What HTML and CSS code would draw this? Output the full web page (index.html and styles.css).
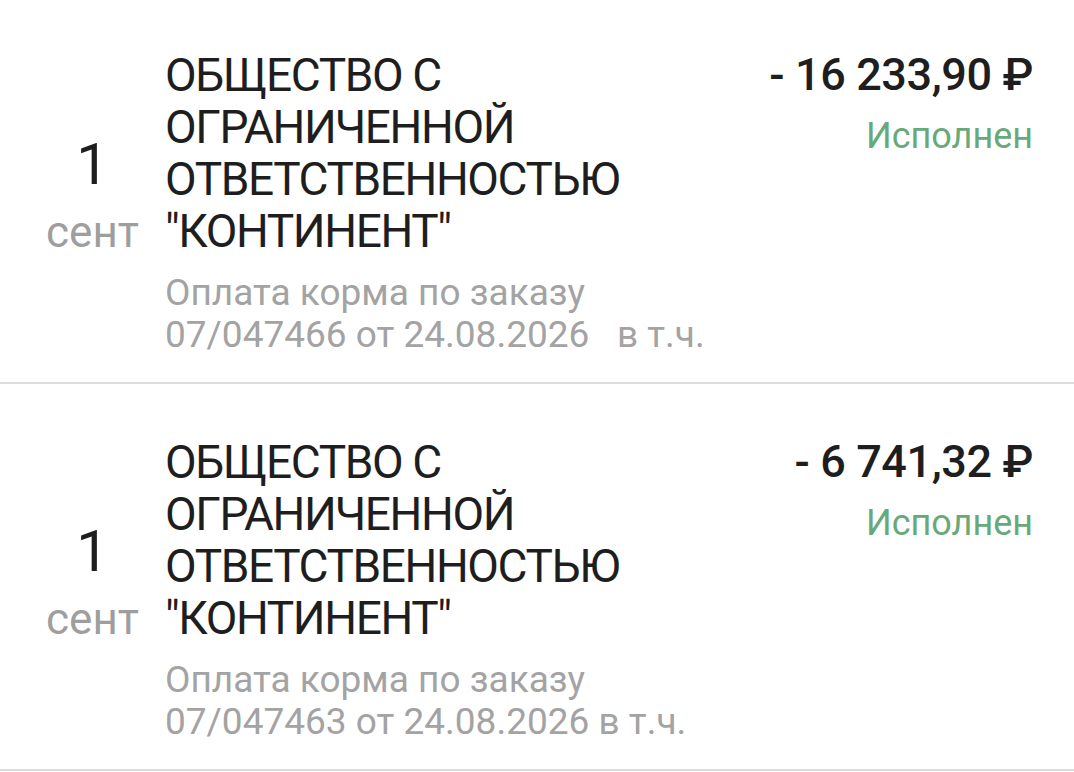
FILE: index.html
```html
<!DOCTYPE html>
<html lang="ru">
<head>
    <meta charset="UTF-8">
    <meta name="viewport" content="width=device-width, initial-scale=1.0">
    <title>Операции</title>
    <link rel="stylesheet" href="styles.css">
</head>
<body>

    <div class="op-list">
        <div class="op-item">
            <div class="op-date">
                <div class="op-day">1</div>
                <div class="op-month">сент</div>
            </div>
            <div class="op-info">
                <div class="op-name">ОБЩЕСТВО С ОГРАНИЧЕННОЙ ОТВЕТСТВЕННОСТЬЮ "КОНТИНЕНТ"</div>
                <div class="op-desc">Оплата корма по заказу<br>07/047466 от 24.08.2026 &nbsp; в т.ч.</div>
            </div>
            <div class="op-sum">
                <div class="op-amount">- 16 233,90 ₽</div>
                <div class="op-status">Исполнен</div>
            </div>
        </div>

        <div class="op-item">
            <div class="op-date">
                <div class="op-day">1</div>
                <div class="op-month">сент</div>
            </div>
            <div class="op-info">
                <div class="op-name">ОБЩЕСТВО С ОГРАНИЧЕННОЙ ОТВЕТСТВЕННОСТЬЮ "КОНТИНЕНТ"</div>
                <div class="op-desc">Оплата корма по заказу<br>07/047463 от 24.08.2026 в т.ч.</div>
            </div>
            <div class="op-sum">
                <div class="op-amount">- 6 741,32 ₽</div>
                <div class="op-status">Исполнен</div>
            </div>
        </div>
    </div>

</body>
</html>
```

FILE: styles.css
```css
body {
    font-family: Roboto, "Noto Sans", sans-serif;
    margin: 0;
    padding: 0;
    background: #ffffff;
    color: #1e1e1e;
}
.op-list {
    margin-top: -3px;
}
.op-item {
    display: flex;
    padding: 50px 41px 26px 30px;
    border-top: 2px solid #dcdcdc;
}
.op-item:first-child {
    border-top-color: transparent;
}
.op-item + .op-item {
    padding-top: 52px;
    border-bottom: 2px solid #dcdcdc;
}
.op-date {
    width: 125px;
    margin-right: 10px;
    padding-top: 85px;
    text-align: center;
}
.op-day {
    font-size: 58px;
    line-height: 60px;
}
.op-month {
    margin-top: 6px;
    font-size: 44px;
    line-height: 64px;
    color: #9e9e9e;
}
.op-info {
    width: 470px;
}
.op-name {
    font-size: 46px;
    line-height: 52px;
    letter-spacing: -1.4px;
}
.op-desc {
    margin-top: 15px;
    font-size: 37px;
    line-height: 42px;
    color: #a3a3a3;
    white-space: nowrap;
}
.op-sum {
    flex: 1;
    text-align: right;
}
.op-amount {
    font-size: 45px;
    font-weight: 500;
    line-height: 52px;
    letter-spacing: -0.4px;
    white-space: nowrap;
}
.op-status {
    margin-top: 9px;
    font-size: 36px;
    line-height: 52px;
    color: #68a97a;
}
```
